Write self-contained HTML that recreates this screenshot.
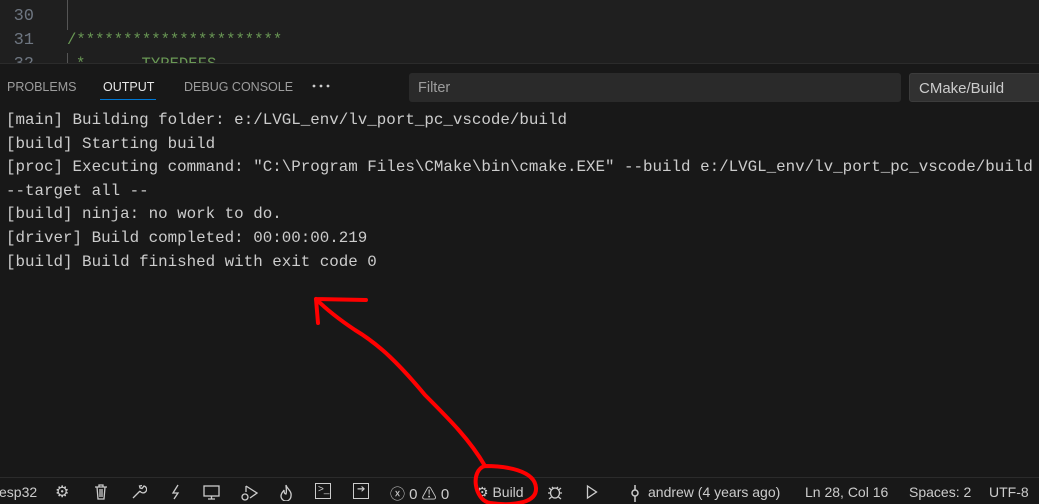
<!DOCTYPE html>
<html><head><meta charset="utf-8"><style>
*{margin:0;padding:0;box-sizing:border-box}
body{width:1039px;height:504px;background:#181818;overflow:hidden;position:relative;font-family:"Liberation Sans",sans-serif;color:#ccc}
.ed{position:absolute;left:0;top:0;width:1039px;height:64px;background:#1f1f1f;border-bottom:1px solid #2b2b2b;font-family:"Liberation Mono",monospace;font-size:15.6px;overflow:hidden}
.ln{position:absolute;left:10px;color:#6e7681;width:24px;text-align:right;font-size:17px}
.tabs{position:absolute;top:80px;font-size:12.5px;color:#9d9d9d}
.out{position:absolute;left:6px;top:109px;font-family:"Liberation Mono",monospace;font-size:15.85px;line-height:23.6px;color:#cccccc;white-space:pre}
.sb{position:absolute;left:0;top:477px;width:1039px;height:27px;background:#181818;border-top:1px solid #2b2b2b;font-size:14px;color:#ccc}
.sb span{position:absolute;top:6px}
.sb svg{position:absolute;top:6px}
</style></head><body>
<div class="ed">
<div style="position:absolute;left:67px;top:0;width:1px;height:30px;background:#555"></div>
<div style="position:absolute;left:67px;top:53px;width:1px;height:11px;background:#555"></div>
<div class="ln" style="top:7px">30</div>
<div class="ln" style="top:31px">31</div>
<div class="ln" style="top:55px">32</div>
<div style="position:absolute;left:67px;top:31px;color:#6a9955">/**********************</div>
<div style="position:absolute;left:76px;top:55px;color:#6a9955">*&nbsp;&nbsp;&nbsp;&nbsp;&nbsp;&nbsp;TYPEDEFS</div>
</div>
<div class="tabs" style="left:7px">PROBLEMS</div>
<div class="tabs" style="left:103px;color:#e7e7e7">OUTPUT</div>
<div style="position:absolute;left:100px;top:99px;width:56px;height:1px;background:#0078d4"></div>
<div class="tabs" style="left:184px">DEBUG CONSOLE</div>
<svg style="position:absolute;left:312px;top:84px" width="18" height="4"><circle cx="2" cy="2" r="1.4" fill="#ccc"/><circle cx="9" cy="2" r="1.4" fill="#ccc"/><circle cx="16" cy="2" r="1.4" fill="#ccc"/></svg>
<div style="position:absolute;left:409px;top:73px;width:492px;height:29px;background:#2a2a2a;border-radius:3px;font-size:14.5px;color:#9d9d9d;padding:7px 0 0 9px">Filter</div>
<div style="position:absolute;left:909px;top:73px;width:140px;height:29px;background:#313131;border:1px solid #3c3c3c;border-radius:3px;font-size:15px;color:#ccc;padding:6px 0 0 9px">CMake/Build</div>
<div class="out">[main] Building folder: e:/LVGL_env/lv_port_pc_vscode/build
[build] Starting build
[proc] Executing command: "C:\Program Files\CMake\bin\cmake.EXE" --build e:/LVGL_env/lv_port_pc_vscode/build
--target all --
[build] ninja: no work to do.
[driver] Build completed: 00:00:00.219
[build] Build finished with exit code 0</div>
<div class="sb">
<span style="left:-1px">esp32</span>
<span style="left:55px;font-size:16px;top:4px">⚙</span>
<svg style="left:94px" width="14" height="16" fill="none" stroke="#ccc" stroke-width="1.3"><path d="M1 3h12M5 3V1h4v2M3 3l1 12h6l1-12M6 5v8M8 5v8"/></svg>
<svg style="left:131px" width="16" height="16" fill="none" stroke="#ccc" stroke-width="1.3"><path d="M2 14l7-7M9 7a3.5 3.5 0 1 0 4-5l-2 2.5-2-.5-.5-2L11 1.5"/></svg>
<svg style="left:170px" width="12" height="16" fill="none" stroke="#ccc" stroke-width="1.3"><path d="M8 1L3 9h5l-4 6"/></svg>
<svg style="left:203px" width="17" height="16" fill="none" stroke="#ccc" stroke-width="1.3"><rect x="1" y="2" width="15" height="10"/><path d="M5 15h7M8.5 12v3"/></svg>
<svg style="left:240px" width="18" height="17" fill="none" stroke="#ccc" stroke-width="1.3"><path d="M6 2l11 7-7 5M6 2v6"/><circle cx="5" cy="13" r="3"/></svg>
<svg style="left:280px" width="13" height="17" fill="none" stroke="#ccc" stroke-width="1.3"><path d="M6 1c1 4 6 6 5 11a5 5 0 0 1-10 0c0-3 2-4 3-6 0 3 1 4 2 4 1-3 0-6 0-9z"/></svg>
<span style="left:315px;border:1px solid #ccc;width:16px;height:16px;top:5px;font-size:10px;padding-left:2px">&gt;_</span>
<span style="left:353px;border:1px solid #ccc;width:16px;height:16px;top:5px;font-size:10px;padding-left:3px">➔</span>
<span style="left:390px;font-size:15px;top:5px">ⓧ 0 ⚠ 0</span>
<span style="left:476px">⚙ Build</span>
<svg style="left:547px" width="16" height="16" fill="none" stroke="#ccc" stroke-width="1.3"><ellipse cx="8" cy="9" rx="4.5" ry="5"/><path d="M1 9h2.5M12.5 9H15M2 4l2.5 2M14 4l-2.5 2M2 15l2.5-2M14 15l-2.5-2M5 3l1.5 1.5M11 3L9.5 4.5"/></svg>
<svg style="left:586px" width="12" height="16" fill="none" stroke="#ccc" stroke-width="1.3"><path d="M1.5 2l9 6-9 6z"/></svg>
<svg style="left:630px" width="10" height="18" fill="none" stroke="#ccc" stroke-width="1.5"><circle cx="5" cy="9" r="3"/><path d="M5 1v5M5 12v6"/></svg>
<span style="left:648px">andrew (4 years ago)</span>
<span style="left:805px">Ln 28, Col 16</span>
<span style="left:909px">Spaces: 2</span>
<span style="left:989px">UTF-8</span>
</div>
<svg width="1039" height="504" style="position:absolute;left:0;top:0" fill="none" stroke="#ff0000" stroke-width="4" stroke-linecap="round" stroke-linejoin="round">
<path d="M485 466 C470 440 450 420 425 395 C400 365 380 345 355 330 C340 320 325 308 316 299"/>
<path d="M316 299 L366 300 M316 299 L318 323"/>
<path d="M485 466 C470 470 474 500 490 503 C510 506 537 504 536 488 C535 470 505 466 485 466"/>
</svg>
</body></html>
